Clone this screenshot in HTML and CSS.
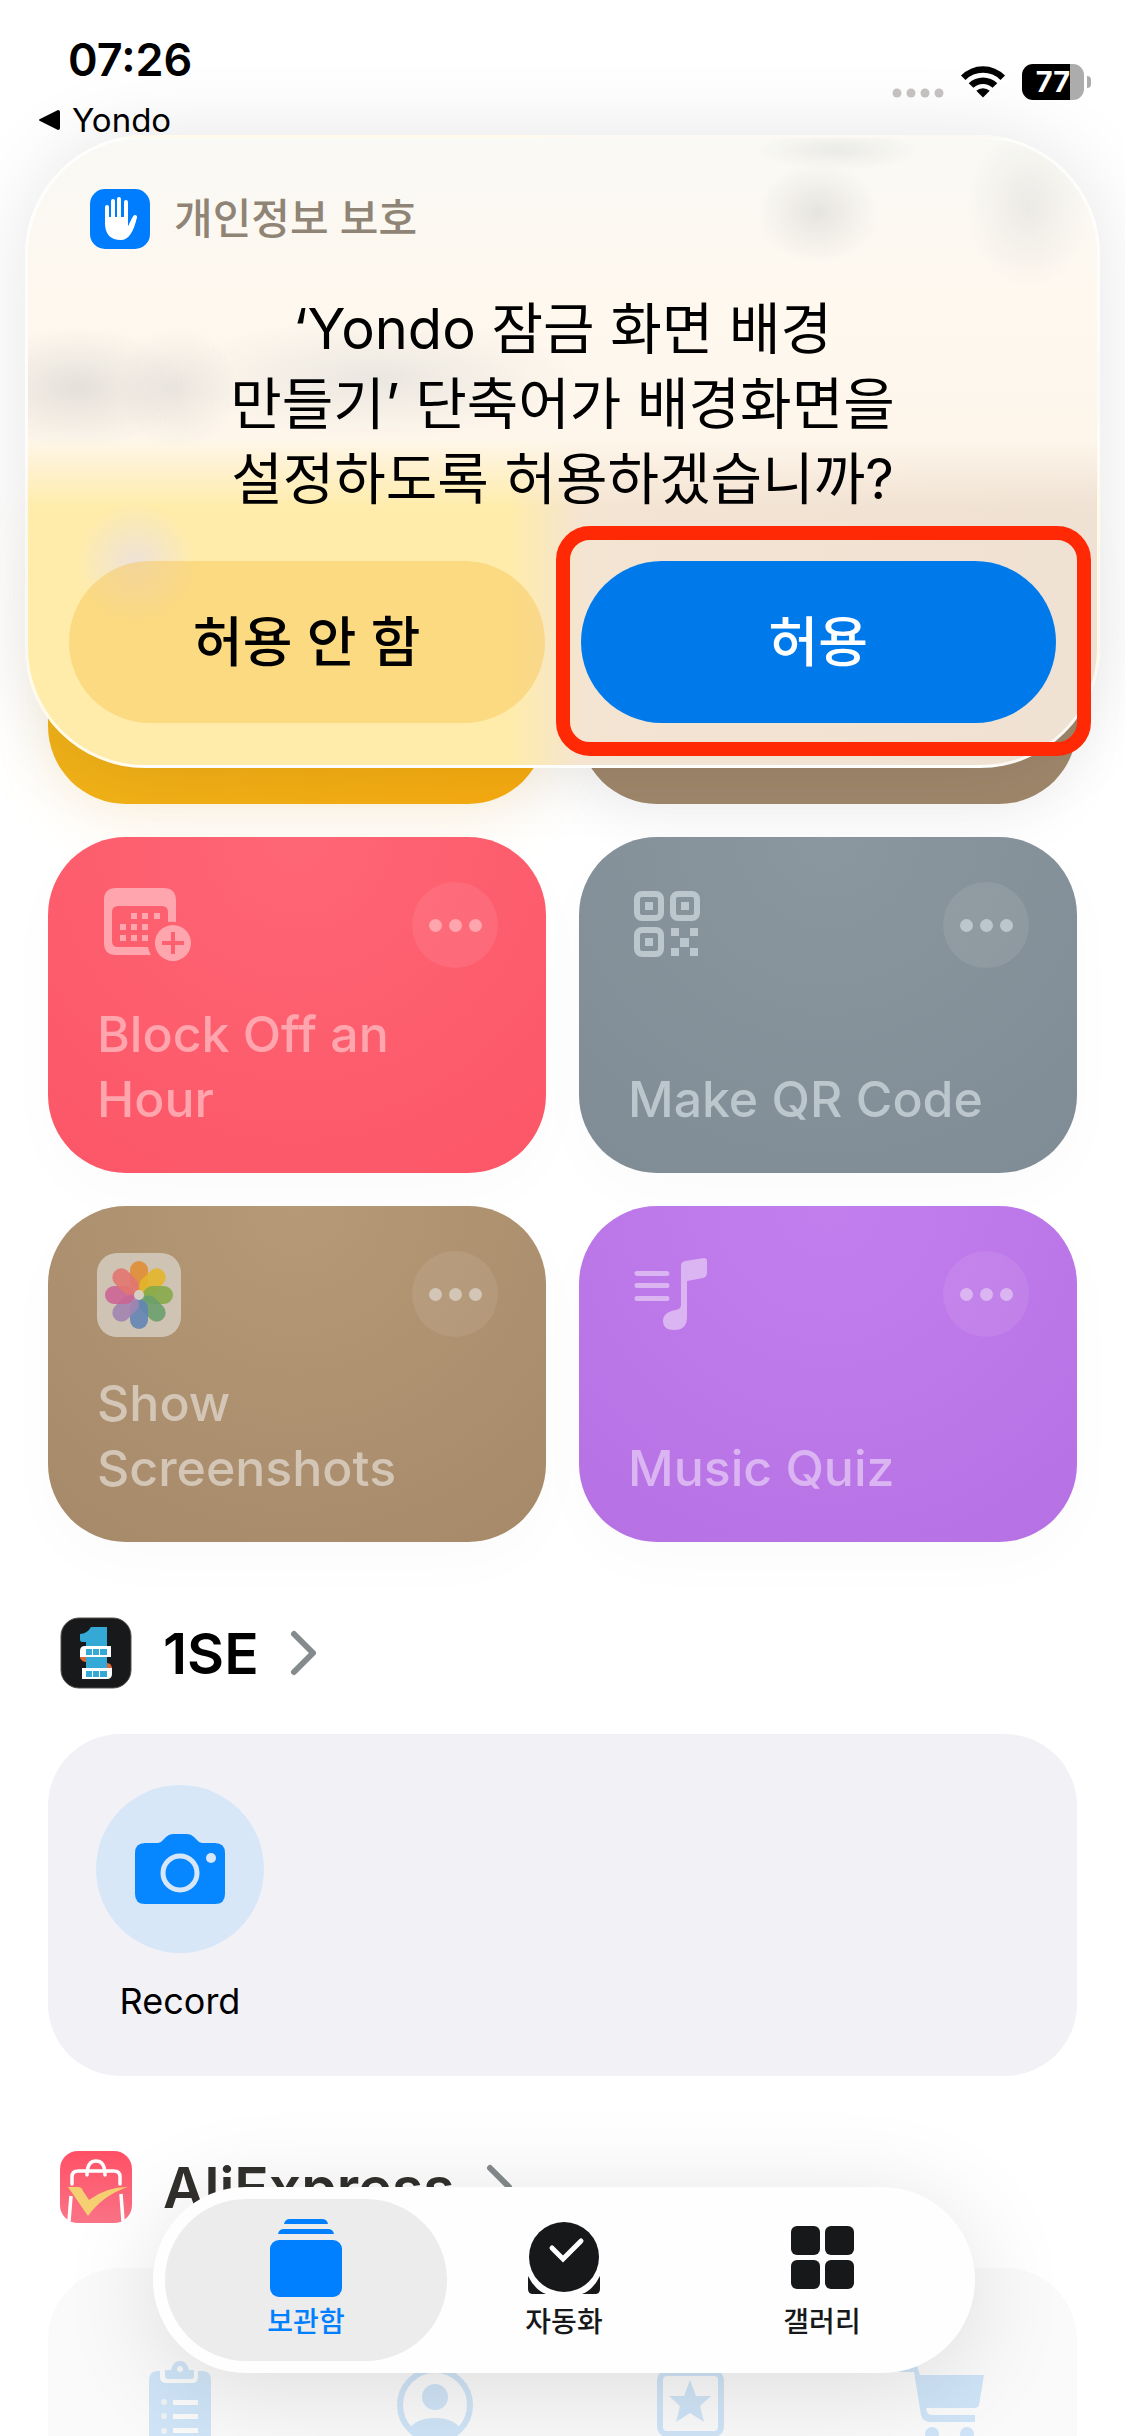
FILE: index.html
```
<!DOCTYPE html>
<html lang="ko">
<head>
  <meta charset="UTF-8">
  <meta name="viewport" content="width=device-width, initial-scale=1">
  <title>단축어</title>
  <link rel="stylesheet" href="styles.css">
</head>
<body>
  <div class="screen">
    <header class="status-bar">
      <div class="status-left">
        <div class="time">07:26</div>
        <a class="back-link" href="#"><svg width="22" height="22" viewBox="0 0 22 22"><path d="M20 1 L2 10 Q0 11 2 12 L20 21 Q22 21 22 19 V3 Q22 1 20 1Z"/></svg>Yondo</a>
      </div>
      <div class="status-right">
        <svg class="signal" width="52" height="12" viewBox="0 0 52 12"><circle cx="5" cy="5" r="4.500"/><circle cx="19" cy="5" r="4.500"/><circle cx="33" cy="5" r="4.500"/><circle cx="47" cy="5" r="4.500"/></svg>
        <svg class="wifi" width="46" height="36" viewBox="0 0 46 36">
          <path d="M1 11.500 A31 31 0 0 1 45 11.500 L40.500 16 A24.500 24.500 0 0 0 5.500 16Z"/>
          <path d="M8.700 19.200 A20.500 20.500 0 0 1 37.300 19.200 L32.600 23.800 A13.800 13.800 0 0 0 13.400 23.800Z"/>
          <path d="M16.300 26.800 A9.800 9.800 0 0 1 29.700 26.800 L23 33.500Z"/>
        </svg>
        <div class="battery"><span>77</span></div>
      </div>
    </header>

    <main class="library">
      <section class="shortcuts">
        <article class="card yellow"></article>
        <article class="card tan"></article>

        <article class="card pink">
          <div class="card-top">
            <svg class="card-icon" width="88" height="84" viewBox="0 0 88 84">
              <path fill-rule="evenodd" d="M19 4H66Q79 4 79 17V38A22 22 0 0 0 71 38V28Q71 22 65 22H21Q15 22 15 28V57Q15 63 21 63H51A23 23 0 0 0 54 71H19Q7 71 7 59V16Q7 4 19 4Z"/>
              <path d="M34 29h6v6h-6zM45 29h6v6h-6zM57 29h6v6h-6zM23 40h6v6h-6zM34 40h6v6h-6zM45 40h6v6h-6zM23 51h6v6h-6zM34 51h6v6h-6zM45 51h6v6h-6z"/>
              <path fill-rule="evenodd" d="M76 41a18 18 0 1 1-.1 0zM74 48v9h-9v4h9v9h4v-9h9v-4h-9v-9z"/>
            </svg>
            <button class="more" aria-label="더 보기"><i></i><i></i><i></i></button>
          </div>
          <h2>Block Off an Hour</h2>
        </article>

        <article class="card slate">
          <div class="card-top">
            <svg class="card-icon" width="88" height="84" viewBox="0 0 88 84">
              <g fill="none" stroke="currentColor" stroke-width="6"><rect x="9" y="10" width="24" height="24" rx="5"/><rect x="45" y="10" width="24" height="24" rx="5"/><rect x="9" y="46" width="24" height="24" rx="5"/></g>
              <path d="M17 18h8v8h-8zM53 18h8v8h-8zM17 54h8v8h-8zM43 44h8v8h-8zM62 44h8v8h-8zM52 54h9v9h-9zM43 64h8v8h-8zM62 64h8v8h-8z"/>
            </svg>
            <button class="more" aria-label="더 보기"><i></i><i></i><i></i></button>
          </div>
          <h2>Make QR Code</h2>
        </article>

        <article class="card brown">
          <div class="card-top">
            <svg class="photos" width="84" height="84" viewBox="0 0 84 84">
              <rect width="84" height="84" rx="20" fill="#cfc3b3"/>
              <g class="petals">
                <rect x="33" y="8" width="18" height="30" rx="9" fill="#e08e35"/>
                <rect x="33" y="8" width="18" height="30" rx="9" fill="#e3b62a" transform="rotate(45 42 42)"/>
                <rect x="33" y="8" width="18" height="30" rx="9" fill="#86aa48" transform="rotate(90 42 42)"/>
                <rect x="33" y="8" width="18" height="30" rx="9" fill="#6aa06d" transform="rotate(135 42 42)"/>
                <rect x="33" y="8" width="18" height="30" rx="9" fill="#6285b4" transform="rotate(180 42 42)"/>
                <rect x="33" y="8" width="18" height="30" rx="9" fill="#a284b1" transform="rotate(225 42 42)"/>
                <rect x="33" y="8" width="18" height="30" rx="9" fill="#cb6593" transform="rotate(270 42 42)"/>
                <rect x="33" y="8" width="18" height="30" rx="9" fill="#e27670" transform="rotate(315 42 42)"/>
              </g>
              <circle cx="42" cy="42" r="5" fill="#d8cfc3"/>
            </svg>
            <button class="more" aria-label="더 보기"><i></i><i></i><i></i></button>
          </div>
          <h2>Show Screenshots</h2>
        </article>

        <article class="card purple">
          <div class="card-top">
            <svg class="card-icon" width="88" height="84" viewBox="0 0 88 84">
              <path d="M9 18H39a2.500 2.500 0 0 1 0 5H9a2.500 2.500 0 0 1 0-5zM9 30H39a2.500 2.500 0 0 1 0 5H9a2.500 2.500 0 0 1 0-5zM9 43H39a2.500 2.500 0 0 1 0 5H9a2.500 2.500 0 0 1 0-5z"/>
              <path d="M53 13Q53 9 57 8L76 5Q79 5 79 8V20Q79 24 75 25L59 28V64Q59 77 46 77Q35 77 35 68Q35 59 48 57Q53 56 53 52Z"/>
            </svg>
            <button class="more" aria-label="더 보기"><i></i><i></i><i></i></button>
          </div>
          <h2>Music Quiz</h2>
        </article>
      </section>

      <section class="app-section">
        <a class="app-title" href="#">
          <svg width="72" height="72" viewBox="0 0 72 72">
            <rect x="1" y="1" width="70" height="70" rx="18" fill="#17191b" stroke="#55504b" stroke-width="1"/>
            <path d="M20 17 Q27 17 31 10 H47 V30 H26 V25 H22 Q20 25 20 22Z" fill="#35a9d6"/>
            <path d="M26 38H47V54H26Z" fill="#35a9d6"/>
            <path d="M20 36V41Q22 45 26 45V40ZM47 46Q52 46 52 52H47Z" fill="#dd6838"/>
            <path d="M25 29H51V40H20V34Q20 29 25 29ZM22 51H52V57Q52 62 47 62H22Z" fill="#fff"/>
            <path d="M26 32h6v6h-6zM33 32h6v6h-6zM40 32h7v6h-7zM26 54h6v6h-6zM33 54h6v6h-6zM40 54h7v6h-7z" fill="#35a9d6"/>
          </svg>
          <span>1SE</span>
          <svg class="chevron" width="28" height="46" viewBox="0 0 28 46"><path d="M4 4 L23 23 L4 42"/></svg>
        </a>
        <div class="panel">
          <button class="action">
            <span class="action-icon">
              <svg width="90" height="70" viewBox="0 0 90 70">
                <path fill="#0787ff" d="M10 9H23Q26 9 28 6L31 3Q34 0 38 0H52Q56 0 59 3L62 6Q64 9 67 9H80Q90 9 90 19V60Q90 70 80 70H10Q0 70 0 60V19Q0 9 10 9Z"/>
                <circle cx="45" cy="39" r="17" fill="none" stroke="#d8e7f8" stroke-width="5"/>
                <circle cx="76" cy="24" r="5" fill="#d8e7f8"/>
              </svg>
            </span>
            Record
          </button>
        </div>
      </section>

      <section class="app-section">
        <a class="app-title faded" href="#">
          <svg width="72" height="72" viewBox="0 0 72 72">
            <defs><linearGradient id="ali" x2="0" y2="1"><stop stop-color="#ff5065"/><stop offset="1" stop-color="#fb7487"/></linearGradient></defs>
            <rect width="72" height="72" rx="18" fill="url(#ali)"/>
            <g fill="none" stroke="#fff" stroke-width="3.500" stroke-linecap="round"><path d="M12 33V26Q12 20 18 20H54Q60 20 60 26V33M27 24Q27 10 36 10Q45 10 45 24"/><path stroke-linecap="butt" d="M11 45L9 70M61 43L63 70"/></g>
            <path d="M8 36H18Q22 36 23 40L29 49Q46 36 68 36Q43 44 28 65Z" fill="#f6cf73"/>
          </svg>
          <span>AliExpress</span>
          <svg class="chevron" width="28" height="46" viewBox="0 0 28 46"><path d="M4 4 L23 23 L4 42"/></svg>
        </a>
        <div class="panel pale">
          <svg width="168" height="168" viewBox="0 0 168 168">
            <path fill-rule="evenodd" d="M62 52H64V58Q64 64 71 64H96Q102 64 102 58V52H106Q115 52 115 61V136H53V61Q53 52 62 52ZM77 81V86H102V81ZM77 95V100H102V95ZM77 109V114H102V109Z"/>
            <path fill-rule="evenodd" d="M69 51H75Q77 42 84 42T93 51H98V57Q98 60 95 60H72Q69 60 69 57ZM84 47a3 3 0 1 0 .1 0z"/>
            <g fill="#f0f1f3"><circle cx="68" cy="83" r="3"/><circle cx="68" cy="97" r="3"/><circle cx="68" cy="112" r="3"/></g>
          </svg>
          <svg width="168" height="168" viewBox="0 0 168 168">
            <circle cx="84" cy="86" r="35" fill="none" stroke="currentColor" stroke-width="6"/>
            <circle cx="84" cy="78" r="13"/><path d="M58 111Q64 99 84 99T110 111Q100 121 84 121T58 111Z"/>
          </svg>
          <svg width="168" height="168" viewBox="0 0 168 168">
            <rect x="54" y="54" width="61" height="61" rx="7" fill="none" stroke="currentColor" stroke-width="6"/>
            <path d="M84 61L90 77H105L94 87L98 103L84 94L70 103L74 87L63 77H78Z"/>
          </svg>
          <svg width="168" height="168" viewBox="0 0 168 168">
            <path d="M38 47H56L59 56H123L118 86Q117 89 113 89H65Q66 96 70 96H114V103H69Q62 103 60 96L53 53H38Z"/>
            <circle cx="71" cy="115" r="7"/><circle cx="106" cy="115" r="7"/>
          </svg>
        </div>
      </section>
    </main>

    <section class="alert" role="alertdialog" aria-labelledby="alert-title">
      <div class="alert-app">
        <svg width="60" height="60" viewBox="0 0 60 60">
          <rect width="60" height="60" rx="15" fill="#007dff"/>
          <g fill="none" stroke="#fff" stroke-width="4" stroke-linecap="round"><path d="M17 18V34M23 12V32M29 10V30M36 13V32M45 28Q43 31 40 38"/></g>
          <path d="M15 28H38V38L42 30L47 28Q42 51 31 51Q15 51 15 34Z" fill="#fff"/>
        </svg>
        <span>개인정보 보호</span>
      </div>
      <h1 id="alert-title">‘Yondo 잠금 화면 배경<br>만들기’ 단축어가 배경화면을<br>설정하도록 허용하겠습니까?</h1>
      <div class="alert-buttons">
        <button class="deny">허용 안 함</button>
        <div class="allow-wrap"><button class="allow">허용</button></div>
      </div>
    </section>

    <nav class="tab-bar">
      <a class="tab active" href="#">
        <svg width="72" height="78" viewBox="0 0 72 78"><path d="M14 5Q15 0 20 0H52Q57 0 58 5ZM8 15Q9 10 14 10H58Q63 10 64 15Z"/><rect y="21" width="72" height="57" rx="9"/></svg>
        보관함
      </a>
      <a class="tab" href="#">
        <svg width="72" height="78" viewBox="0 0 72 78"><circle cx="36" cy="38" r="35"/><path d="M0 57Q7 71 18 75H5Q0 75 0 70ZM72 57Q65 71 54 75H67Q72 75 72 70Z"/><path class="hand" d="M24 29L35 40L53 22"/></svg>
        자동화
      </a>
      <a class="tab" href="#">
        <svg width="72" height="78" viewBox="0 0 72 78"><rect x="5" y="7" width="29" height="29" rx="6"/><rect x="39" y="7" width="29" height="29" rx="6"/><rect x="5" y="41" width="29" height="29" rx="6"/><rect x="39" y="41" width="29" height="29" rx="6"/></svg>
        갤러리
      </a>
    </nav>
  </div>
</body>
</html>
```
FILE: styles.css
```
* {
  box-sizing: border-box;
}
body {
  margin: 0;
  background: #fff;
  color: #000;
  font-family: Inter, "Noto Sans CJK KR", sans-serif;
}
button {
  font-family: inherit;
  border: none;
  padding: 0;
  cursor: pointer;
}
a {
  color: inherit;
  text-decoration: none;
}
h1, h2 {
  margin: 0;
}
svg {
  fill: currentColor;
  flex-shrink: 0;
  display: block;
  overflow: visible;
}
.screen {
  position: relative;
  height: 100vh;
  overflow: hidden;
}

/* status bar */
.status-bar {
  position: relative;
  z-index: 1;
  display: flex;
  justify-content: space-between;
  height: 136px;
  padding: 36px 34px 0 38px;
}
.time {
  padding-left: 30px;
  font-size: 45px;
  line-height: 48px;
  font-weight: 600;
}
.back-link {
  display: flex;
  align-items: center;
  gap: 12px;
  margin-top: 16px;
  font-size: 33px;
  line-height: 40px;
}
.status-right {
  display: flex;
  align-items: flex-end;
  gap: 16px;
  height: 64px;
}
.signal {
  color: #c4c0c0;
}
.battery {
  position: relative;
  width: 62px;
  height: 36px;
  margin-right: 7px;
  border-radius: 11px;
  background: linear-gradient(to right, #000 78%, #acacac 78%);
  color: #fff;
  font-size: 29px;
  line-height: 36px;
  font-weight: 700;
  text-align: center;
}
.battery::after {
  content: "";
  position: absolute;
  top: 12px;
  right: -7px;
  width: 4px;
  height: 12px;
  border-radius: 0 4px 4px 0;
  background: #acacac;
}

/* shortcut cards */
.library {
  padding: 332px 48px 0;
}
.shortcuts {
  display: grid;
  grid-template-columns: 1fr 1fr;
  gap: 33px;
}
.card {
  height: 336px;
  padding: 45px 48px 41px 49px;
  border-radius: 78px;
  display: flex;
  flex-direction: column;
  justify-content: space-between;
}
.card h2 {
  font-size: 50px;
  line-height: 65px;
  font-weight: 500;
  font-variant-ligatures: none;
}
.card-top {
  display: flex;
  justify-content: space-between;
}
.card-top svg {
  margin-top: 2px;
}
.more {
  display: flex;
  align-items: center;
  justify-content: center;
  gap: 7px;
  width: 86px;
  height: 86px;
  border-radius: 50%;
  background: rgba(255, 255, 255, 0.08);
  color: inherit;
}
.more i {
  width: 13px;
  height: 13px;
  border-radius: 50%;
  background: currentColor;
}
.yellow {
  background: linear-gradient(to right, #f1b218, #f7ab10);
  box-shadow: 0 14px 60px rgba(245, 190, 90, 0.2);
}
.tan {
  background: #9f876b;
  box-shadow: 0 14px 60px rgba(0, 0, 0, 0.05);
}
.pink {
  background: radial-gradient(circle at 50% 0, #ff6675, #fb5667);
  color: #ffa5ad;
}
.slate {
  background: radial-gradient(circle at 50% 0, #8b979f, #808c95);
  color: #bcc6cd;
}
.brown {
  background: radial-gradient(circle at 50% 0, #b69976, #a68969);
  color: #d3c6b6;
}
.purple {
  background: radial-gradient(circle at 50% 0, #c37eee, #b571e3);
  color: #dbb5f2;
}
.pink, .slate, .brown, .purple {
  box-shadow: 0 20px 60px rgba(0, 0, 0, 0.02);
}
.petals rect {
  opacity: 0.9;
}

/* app sections */
.app-section {
  padding-top: 75px;
}
.app-title {
  display: flex;
  align-items: center;
  height: 72px;
  margin-bottom: 45px;
  padding-left: 12px;
  gap: 31px;
  font-size: 57px;
  font-weight: 600;
}
.chevron {
  fill: none;
  stroke: #858a8c;
  stroke-width: 6;
  stroke-linecap: round;
  stroke-linejoin: round;
}
.faded {
  color: #32302c;
}
.panel {
  display: flex;
  justify-content: space-between;
  height: 342px;
  padding: 51px 48px;
  border-radius: 72px;
  background: #f2f1f6;
}
.pale {
  background: linear-gradient(to bottom, #fafafa, #f9f9fa);
  color: #cfe4f7;
}
.action {
  display: flex;
  flex-direction: column;
  align-items: center;
  gap: 26px;
  background: none;
  color: #000;
  font-size: 36px;
  line-height: 44px;
}
.action-icon {
  display: flex;
  align-items: center;
  justify-content: center;
  width: 168px;
  height: 168px;
  border-radius: 50%;
  background: #d8e7f8;
}

/* permission alert */
.alert {
  position: absolute;
  top: 135px;
  left: 25px;
  right: 25px;
  padding: 51px 41px 42px;
  border: 3px solid rgba(255, 255, 255, 0.75);
  border-radius: 120px;
  background:
    radial-gradient(60px 60px at 108px 425px, #eee2d8, transparent),
    radial-gradient(110px 60px at 50px 250px, rgba(190, 190, 190, 0.4), transparent),
    radial-gradient(60px 60px at 150px 250px, rgba(190, 190, 190, 0.3), transparent),
    radial-gradient(200px 60px at 350px 240px, rgba(200, 200, 200, 0.35), transparent),
    radial-gradient(60px 50px at 790px 75px, rgba(190, 190, 190, 0.35), transparent),
    radial-gradient(80px 20px at 810px 12px, rgba(200, 200, 200, 0.3), transparent),
    radial-gradient(60px 80px at 1000px 70px, rgba(200, 200, 200, 0.3), transparent),
    linear-gradient(to bottom, #f9f9f5 0, #fef8ef 150px, #fef6eb 300px, rgba(255, 243, 215, 0) 370px),
    linear-gradient(to right, #ffecaa 45%, #f4e4d2 52%, #efe1d3);
  box-shadow: 0 0 80px rgba(0, 0, 0, 0.1);
}
.alert-app {
  display: flex;
  align-items: center;
  gap: 24px;
  height: 60px;
  padding-left: 21px;
  color: #8f8475;
  font-size: 42px;
  font-weight: 500;
}
.alert-app span {
  padding-bottom: 8px;
}
.alert h1 {
  margin-top: 43px;
  font-size: 56px;
  line-height: 75px;
  font-weight: 400;
  text-align: center;
}
.alert-buttons {
  display: grid;
  grid-template-columns: 1fr 1fr;
  gap: 36px;
  margin-top: 44px;
}
.alert-buttons button {
  width: 100%;
  height: 162px;
  padding-bottom: 8px;
  border-radius: 81px;
  font-size: 54px;
  font-weight: 500;
}
.deny {
  background: rgba(247, 200, 90, 0.5);
  color: #000;
}
.allow {
  background: #007aeb;
  color: #fff;
}
.allow-wrap {
  position: relative;
}
/* marker around the allow button */
.allow-wrap::after {
  content: "";
  position: absolute;
  inset: -35px -35px -33px -25px;
  border: 14px solid #ff2a05;
  border-radius: 34px;
  pointer-events: none;
}

/* tab bar */
.tab-bar {
  position: absolute;
  bottom: 63px;
  left: 153px;
  right: 150px;
  display: flex;
  padding: 12px;
  border-radius: 93px;
  background: #fefefe;
  box-shadow: 0 14px 100px rgba(0, 0, 0, 0.12);
}
.tab {
  flex: 1;
  display: flex;
  flex-direction: column;
  align-items: center;
  gap: 5px;
  height: 162px;
  padding-top: 20px;
  border-radius: 81px;
  color: #16181a;
  font-size: 28px;
  line-height: 40px;
  font-weight: 500;
}
.tab + .tab {
  margin-left: -24px;
}
.tab.active {
  background: #ececec;
  color: #0080ff;
}
.hand {
  fill: none;
  stroke: #fff;
  stroke-width: 5;
  stroke-linecap: round;
}
```
